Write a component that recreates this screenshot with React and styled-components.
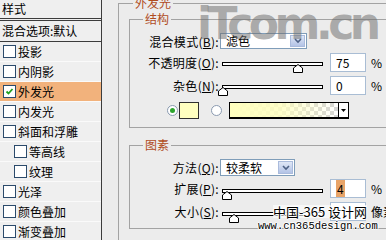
import React from 'react';
import styled, { createGlobalStyle } from 'styled-components';

const GlobalStyle = createGlobalStyle`
  html, body { margin: 0; padding: 0; background: #ececec; }
  body {
    font-family: "Noto Sans CJK SC", "DejaVu Sans", sans-serif;
    font-size: 12px;
    color: #000;
  }
`;

const Screen = styled.div`
  position: relative;
  display: flex;
  width: 386px;
  height: 240px;
  overflow: hidden;
  background: #ececec;
`;

/* ---- left list ---- */

const StylePanel = styled.div`
  flex: none;
  width: 101px;
  border-right: 1px solid #3c3c3c;
  background: #efefef;
`;

const PanelHeader = styled.div`
  height: 18px;
  line-height: 18px;
  padding-left: 2px;
  border-bottom: 3px double #3c3c3c;
`;

const BlendRow = styled.div`
  height: 20px;
  line-height: 20px;
  padding-left: 2px;
  border-bottom: 1px solid #3c3c3c;
`;

const EffectRow = styled.div`
  display: flex;
  align-items: center;
  height: 19px;
  padding-left: ${p => (p.$indent ? 14 : 3)}px;
  border-bottom: 1px solid #fafafa;
  background: ${p => (p.$active ? '#f2b27c' : 'transparent')};
`;

const Box = styled.span`
  flex: none;
  display: inline-flex;
  align-items: center;
  justify-content: center;
  width: 11px;
  height: 11px;
  margin-right: 2px;
  border: 1px solid #2b4a6b;
  background: #fff;
`;

const Check = ({ on }) => (
  <Box>
    {on && (
      <svg width="9" height="9" viewBox="0 0 9 9">
        <polyline points="1.5,4.5 3.5,6.5 7.5,2" fill="none" stroke="#21a121" strokeWidth="1.8" />
      </svg>
    )}
  </Box>
);

const effects = [
  { name: '投影' },
  { name: '内阴影' },
  { name: '外发光', on: true },
  { name: '内发光' },
  { name: '斜面和浮雕' },
  { name: '等高线', indent: true },
  { name: '纹理', indent: true },
  { name: '光泽' },
  { name: '颜色叠加' },
  { name: '渐变叠加' },
];

/* ---- right settings ---- */

const Settings = styled.div`
  flex: 1;
  padding-left: 16px;
  margin-right: -40px;
`;

const OuterGroup = styled.fieldset`
  margin: -3px 0 0 0;
  padding: 0 0 30px 14px;
  border: 1px solid #a3a3a3;
  min-width: 0;
`;

const Group = styled.fieldset`
  margin: ${p => p.$top}px 0 0 -4px;
  padding: 6px 0 ${p => p.$bottom}px 13px;
  border: 1px solid #a3a3a3;
  min-width: 0;
`;

const Legend = styled.legend`
  padding: 0 2px;
  line-height: ${p => p.$lh}px;
  color: #b04c1e;
  font-size: 12px;
`;

const Row = styled.div`
  display: flex;
  align-items: center;
  height: ${p => p.$h}px;
  margin-top: ${p => p.$mt || 0}px;
  padding-left: ${p => p.$pl || 0}px;
`;

const Label = styled.span`
  flex: none;
  width: 76px;
  text-align: right;
  white-space: nowrap;
  margin-right: 1px;
  letter-spacing: 0.3px;
`;

const SelectBox = styled.div`
  flex: none;
  display: flex;
  align-items: center;
  width: ${p => p.$w}px;
  height: ${p => p.$h}px;
  box-sizing: border-box;
  border: 1px solid #7f9db9;
  background: #fff;
`;

const SelectValue = styled.span`
  flex: 1;
  padding-left: 5px;
  line-height: 14px;
`;

const SelectButton = styled.span`
  flex: none;
  display: flex;
  align-items: center;
  justify-content: center;
  width: 15px;
  height: calc(100% - 2px);
  margin-right: 1px;
  box-sizing: border-box;
  border: 1px solid #aabbdc;
  background: linear-gradient(#dfe7f6, #b3c3e6);
`;

const Select = ({ value, w, h }) => (
  <SelectBox $w={w} $h={h}>
    <SelectValue>{value}</SelectValue>
    <SelectButton>
      <svg width="8" height="6" viewBox="0 0 8 6">
        <polyline points="1,1 4,4 7,1" fill="none" stroke="#4d6185" strokeWidth="1.6" />
      </svg>
    </SelectButton>
  </SelectBox>
);

const SliderBox = styled.div`
  position: relative;
  flex: none;
  width: 101px;
  height: 12px;
  margin: 12px 0 0 2px;
`;

const Track = styled.div`
  height: 4px;
  box-sizing: border-box;
  border: 1px solid #000;
  background: #fff;
`;

const Thumb = styled.svg`
  position: absolute;
  top: 2px;
`;

const Slider = ({ pos }) => (
  <SliderBox>
    <Track />
    <Thumb width="10" height="9" viewBox="0 0 10 9" style={{ left: `${pos - 4}px` }}>
      <polygon points="0.5,4 5,0.5 9.5,4 9.5,8.5 0.5,8.5" fill="#fff" stroke="#000" />
    </Thumb>
  </SliderBox>
);

const NumberBox = styled.div`
  flex: none;
  width: 36px;
  height: 19px;
  margin-left: 7px;
  box-sizing: border-box;
  border: 1px solid #a9bdd4;
  background: #fff;
  padding-left: 5px;
  line-height: 17px;
`;

const Selected = styled.span`
  background: #e8a468;
  padding: 0 1px;
`;

const Unit = styled.span`
  margin-left: 5px;
  white-space: nowrap;
`;

const Radio = styled.span`
  flex: none;
  display: inline-flex;
  align-items: center;
  justify-content: center;
  width: 9px;
  height: 9px;
  border-radius: 50%;
  border: 1px solid #8a9ab0;
  background: #fff;
  margin-right: ${p => p.$mr}px;
  &::after {
    content: '';
    width: 5px;
    height: 5px;
    border-radius: 50%;
    background: ${p => (p.$on ? '#2ea52e' : 'transparent')};
  }
`;

const Swatch = styled.span`
  flex: none;
  width: 20px;
  height: 17px;
  box-sizing: border-box;
  border: 1px solid #303030;
  background: #ffffc0;
  margin-right: 12px;
`;

const GradientBox = styled.div`
  flex: none;
  display: flex;
  width: 120px;
  height: 17px;
  box-sizing: border-box;
  border: 1px solid #000;
  border-bottom-width: 2px;
`;

const GradientFill = styled.span`
  flex: 1;
  background-image: linear-gradient(to right, #ffffbe 0%, rgba(255, 255, 190, 0.85) 45%, rgba(255, 255, 190, 0) 100%),
    repeating-conic-gradient(#d4d4d4 0% 25%, #ffffff 0% 50%);
  background-size: 100% 100%, 8px 8px;
`;

const GradientArrow = styled.span`
  flex: none;
  display: flex;
  align-items: center;
  justify-content: center;
  width: 9px;
  border-left: 1px solid #000;
  background: #fff;
`;

/* ---- watermarks ---- */

const SiteMark = styled.div`
  position: absolute;
  left: 197px;
  top: -2px;
  font-family: "DejaVu Sans", sans-serif;
  font-weight: bold;
  font-size: 44px;
  letter-spacing: -4.5px;
  color: rgba(112, 112, 112, 0.55);
  pointer-events: none;
`;

const CaptionMark = styled.div`
  position: absolute;
  left: ${p => p.$x}px;
  top: ${p => p.$y}px;
  font-family: ${p => (p.$mono ? '"Liberation Mono", monospace' : '"Noto Sans CJK SC", sans-serif')};
  font-size: ${p => p.$size}px;
  line-height: 1;
  white-space: nowrap;
  color: #000;
  text-shadow: 1px 0 #fff, -1px 0 #fff, 0 1px #fff, 0 -1px #fff;
  background: ${p => (p.$mono ? 'transparent' : 'rgba(255,255,255,0.6)')};
`;

export default function App() {
  return (
    <>
      <GlobalStyle />
      <Screen>
        <StylePanel>
          <PanelHeader>样式</PanelHeader>
          <BlendRow>混合选项:默认</BlendRow>
          {effects.map(e => (
            <EffectRow key={e.name} $indent={e.indent} $active={e.on}>
              <Check on={e.on} />
              {e.name}
            </EffectRow>
          ))}
        </StylePanel>

        <Settings>
          <OuterGroup>
            <Legend $lh={12}>外发光</Legend>
            <Group $top={3} $bottom={7}>
              <Legend $lh={14}>结构</Legend>
              <Row $h={18}>
                <Label>混合模式(<u>B</u>):</Label>
                <Select value="滤色" w={87} h={16} />
              </Row>
              <Row $h={24}>
                <Label>不透明度(<u>O</u>):</Label>
                <Slider pos={75} />
                <NumberBox>75</NumberBox>
                <Unit>%</Unit>
              </Row>
              <Row $h={22}>
                <Label>杂色(<u>N</u>):</Label>
                <Slider pos={0} />
                <NumberBox>0</NumberBox>
                <Unit>%</Unit>
              </Row>
              <Row $h={19} $mt={5} $pl={24}>
                <Radio $on $mr={1} />
                <Swatch />
                <Radio $mr={7} />
                <GradientBox>
                  <GradientFill />
                  <GradientArrow>
                    <svg width="5" height="3" viewBox="0 0 5 3">
                      <polygon points="0,0 5,0 2.5,3" fill="#000" />
                    </svg>
                  </GradientArrow>
                </GradientBox>
              </Row>
            </Group>

            <Group $top={10} $bottom={5}>
              <Legend $lh={14}>图素</Legend>
              <Row $h={19}>
                <Label>方法(<u>Q</u>):</Label>
                <Select value="较柔软" w={75} h={17} />
              </Row>
              <Row $h={23}>
                <Label>扩展(<u>P</u>):</Label>
                <Slider pos={4} />
                <NumberBox><Selected>4</Selected></NumberBox>
                <Unit>%</Unit>
              </Row>
              <Row $h={23}>
                <Label>大小(<u>S</u>):</Label>
                <Slider pos={11} />
                <NumberBox />
                <Unit>像素</Unit>
              </Row>
            </Group>
          </OuterGroup>
        </Settings>

        <SiteMark>iTcom.cn</SiteMark>
        <CaptionMark $x={273} $y={205} $size={13}>中国-365 设计网</CaptionMark>
        <CaptionMark $x={258} $y={221} $size={10.5} $mono>www.cn365design.com</CaptionMark>
      </Screen>
    </>
  );
}
